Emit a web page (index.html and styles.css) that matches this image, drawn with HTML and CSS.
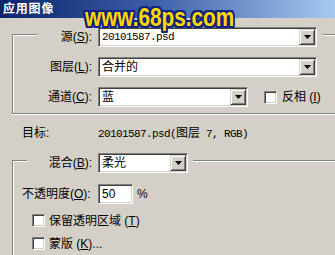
FILE: index.html
```html
<!DOCTYPE html>
<html lang="zh">
<head>
<meta charset="utf-8">
<title>应用图像</title>
<link rel="stylesheet" href="styles.css">
</head>
<body>
<div class="titlebar">应用图像</div>
<div class="watermark">www.68ps.com</div>
<div class="main">
  <div class="group g1">
    <div class="legend legend1">
      <span class="label l1">源(<u>S</u>):</span>
      <div class="select w-long"><span class="val mono">20101587.psd</span><span class="btn"><svg width="7" height="4" viewBox="0 0 7 4"><polygon points="0,0 7,0 3.5,4" fill="#000"/></svg></span></div>
    </div>
    <div class="row r1">
      <span class="label l1">图层(<u>L</u>):</span>
      <div class="select w-long"><span class="val">合并的</span><span class="btn"><svg width="7" height="4" viewBox="0 0 7 4"><polygon points="0,0 7,0 3.5,4" fill="#000"/></svg></span></div>
    </div>
    <div class="row r1">
      <span class="label l1">通道(<u>C</u>):</span>
      <div class="select w-mid"><span class="val">蓝</span><span class="btn"><svg width="7" height="4" viewBox="0 0 7 4"><polygon points="0,0 7,0 3.5,4" fill="#000"/></svg></span></div>
      <span class="check invert"></span><span class="ctext">反相 (<u>I</u>)</span>
    </div>
  </div>
  <div class="target">
    <span class="tlabel">目标:</span>
    <span class="tval"><span class="mono">20101587.psd(</span>图层<span class="mono"> 7, RGB)</span></span>
  </div>
  <div class="group g2">
    <div class="legend legend2">
      <span class="label l2">混合(<u>B</u>):</span>
      <div class="select w-short"><span class="val">柔光</span><span class="btn"><svg width="7" height="4" viewBox="0 0 7 4"><polygon points="0,0 7,0 3.5,4" fill="#000"/></svg></span></div>
    </div>
    <div class="row opacity">
      <span class="olabel">不透明度(<u>O</u>):</span>
      <div class="input"><span class="val">50</span></div>
      <span class="pct">%</span>
    </div>
    <div class="row crow first">
      <span class="check"></span><span class="ctext">保留透明区域 (<u>T</u>)</span>
    </div>
    <div class="row crow">
      <span class="check"></span><span class="ctext">蒙版 (<u>K</u>)...</span>
    </div>
  </div>
</div>
</body>
</html>
```
FILE: styles.css
```css
html, body {
  margin: 0;
  padding: 0;
}
body {
  width: 335px;
  height: 255px;
  overflow: hidden;
  position: relative;
  background: #d4d0c8;
  color: #000;
  font-family: "Liberation Sans", "Noto Sans CJK SC", sans-serif;
  font-size: 12px;
  line-height: 16px;
}
u {
  text-decoration: underline;
  text-underline-offset: 1px;
}
.titlebar {
  height: 18px;
  line-height: 18px;
  padding-left: 3px;
  background: linear-gradient(90deg, #0a246a 0%, #3a5ea6 45%, #a6caf0 100%);
  color: #fff;
  font-weight: bold;
  font-size: 12px;
  letter-spacing: 0.8px;
}
.watermark {
  position: absolute;
  left: 85px;
  top: 4px;
  font-family: "Liberation Sans", sans-serif;
  font-weight: bold;
  font-size: 25px;
  line-height: 26px;
  color: #ffd800;
  transform: scaleX(0.83);
  transform-origin: left top;
  text-shadow:
    2px 0 0 #14237e, -2px 0 0 #14237e, 0 2px 0 #14237e, 0 -2px 0 #14237e,
    2px 2px 0 #14237e, -2px -2px 0 #14237e, 2px -2px 0 #14237e, -2px 2px 0 #14237e,
    1px 2px 0 #14237e, -1px 2px 0 #14237e, 2px 1px 0 #14237e, -2px 1px 0 #14237e,
    1px -2px 0 #14237e, -1px -2px 0 #14237e, 2px -1px 0 #14237e, -2px -1px 0 #14237e;
}
.main {
  padding-top: 16px;
}
.group {
  margin-left: 12px;
  margin-right: -12px;
  border-top: 1px solid #808080;
  border-left: 1px solid #808080;
  box-shadow: inset 1px 1px 0 #fff;
}
.g1 {
  border-bottom: 1px solid #808080;
  box-shadow: inset 1px 1px 0 #fff, 0 1px 0 #fff;
  padding-bottom: 6px;
}
.g2 {
  margin-top: 19px;
  height: 96px;
}
.legend {
  display: flex;
  align-items: center;
  width: fit-content;
  background: #d4d0c8;
  margin-top: -8px;
}
.legend1 {
  margin-left: 24px;
  padding-right: 6px;
}
.legend2 {
  margin-left: 14px;
  padding-right: 5px;
}
.row {
  display: flex;
  align-items: center;
}
.r1 {
  margin-top: 10px;
  padding-left: 24px;
}
.label {
  text-align: right;
  margin-right: 6px;
  white-space: nowrap;
}
.l1 { width: 55px; }
.l2 { width: 65px; }
.select {
  display: flex;
  align-items: center;
  height: 20px;
  box-sizing: border-box;
  background: #fff;
  border: 1px solid;
  border-color: #808080 #fff #fff #808080;
  box-shadow: inset 1px 1px 0 #404040, inset -1px -1px 0 #d4d0c8;
  padding: 2px 2px 2px 3px;
}
.w-long { width: 219px; }
.w-mid { width: 150px; }
.w-short { width: 90px; }
.val {
  flex: 1;
  font-size: 12px;
  line-height: 16px;
  white-space: nowrap;
}
.mono {
  font-family: "Liberation Mono", "Noto Sans CJK SC", monospace;
  font-size: 11px;
  letter-spacing: -0.6px;
}
.btn {
  display: flex;
  align-items: center;
  justify-content: center;
  width: 16px;
  height: 16px;
  box-sizing: border-box;
  background: #d4d0c8;
  border: 1px solid;
  border-color: #d4d0c8 #404040 #404040 #d4d0c8;
  box-shadow: inset 1px 1px 0 #fff, inset -1px -1px 0 #808080;
  margin-right: -1px;
}
.btn svg { display: block; }
.check {
  display: block;
  width: 13px;
  height: 13px;
  box-sizing: border-box;
  background: #fff;
  border: 1px solid;
  border-color: #808080 #fff #fff #808080;
  box-shadow: inset 1px 1px 0 #404040, inset -1px -1px 0 #d4d0c8;
  flex: none;
}
.invert {
  margin-left: 16px;
}
.ctext {
  margin-left: 5px;
  white-space: nowrap;
}
.target {
  display: flex;
  margin-top: 11px;
  padding-left: 22px;
  height: 16px;
  align-items: center;
}
.tlabel {
  width: 76px;
}
.tval {
  white-space: nowrap;
}
.opacity {
  margin-top: 11px;
  padding-left: 9px;
}
.olabel {
  width: 76px;
  white-space: nowrap;
}
.input {
  display: flex;
  align-items: center;
  width: 35px;
  height: 20px;
  box-sizing: border-box;
  background: #fff;
  border: 1px solid;
  border-color: #808080 #fff #fff #808080;
  box-shadow: inset 1px 1px 0 #404040, inset -1px -1px 0 #d4d0c8;
  padding: 2px 3px;
}
.pct {
  margin-left: 4px;
}
.crow {
  padding-left: 19px;
  margin-top: 10px;
  height: 13px;
}
.crow .ctext {
  margin-left: 4px;
}
```
